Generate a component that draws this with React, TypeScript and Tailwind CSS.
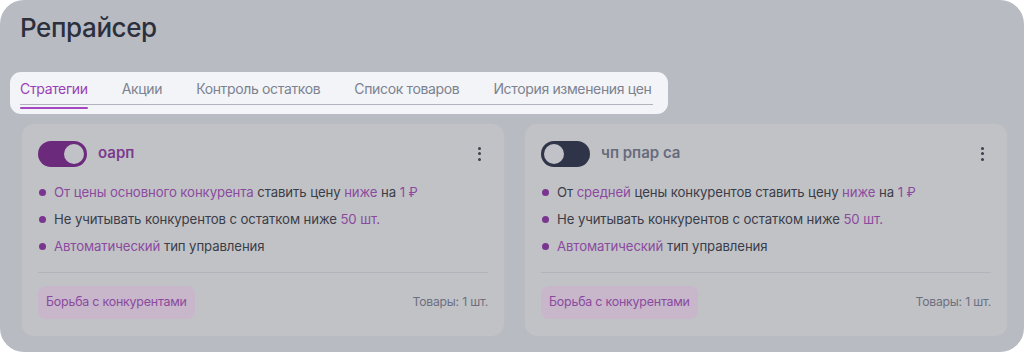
import React from "react";

const P = ({ children }: { children: React.ReactNode }) => (
  <span className="text-[#8b4a9f]">{children}</span>
);

function Bullet({ children }: { children: React.ReactNode }) {
  return (
    <div className="flex items-center h-[27px]">
      <span className="w-[7px] h-[7px] rounded-full bg-[#7a3590] mr-[8px] shrink-0" />
      <span className="text-[13.2px] text-[#3a3d49] tracking-[-0.1px] whitespace-nowrap">{children}</span>
    </div>
  );
}

function Toggle({ on }: { on: boolean }) {
  return (
    <div
      className={`w-[49px] h-[26px] rounded-full flex items-center px-[3px] ${
        on ? "bg-[#6c2a7d] justify-end" : "bg-[#2f3448] justify-start"
      }`}
    >
      <div className="w-[20px] h-[20px] rounded-full bg-[#c1c2c7]" />
    </div>
  );
}

function Card({
  on,
  name,
  lines,
}: {
  on: boolean;
  name: string;
  lines: React.ReactNode[];
}) {
  return (
    <div className="rounded-[13px] bg-[#c1c2c6] border border-[#bbbcc2] px-[16px] pt-[16px] pb-[17px] flex flex-col">
      <div className="flex items-center h-[27px]">
        <Toggle on={on} />
        <span
          className={`ml-[11px] text-[15px] font-semibold ${
            on ? "text-[#7b3a8f]" : "text-[#676b7c]"
          }`}
        >
          {name}
        </span>
        <div className="ml-auto mr-[7px] flex flex-col gap-[2.5px]">
          <span className="w-[3px] h-[3px] rounded-full bg-[#3d4150]" />
          <span className="w-[3px] h-[3px] rounded-full bg-[#3d4150]" />
          <span className="w-[3px] h-[3px] rounded-full bg-[#3d4150]" />
        </div>
      </div>
      <div className="mt-[12px] pl-[1px] flex flex-col">
        {lines.map((l, i) => (
          <Bullet key={i}>{l}</Bullet>
        ))}
      </div>
      <div className="mt-[12px] h-px bg-[#b3b4bb]" />
      <div className="mt-[13px] flex items-center justify-between">
        <div className="h-[33px] px-[8px] rounded-[8px] bg-[#c8b6cb] flex items-center text-[12.4px] text-[#8a4a9e] tracking-[-0.2px] whitespace-nowrap">
          Борьба с конкурентами
        </div>
        <span className="text-[12.2px] text-[#6d7080] tracking-[-0.2px] whitespace-nowrap">Товары: 1 шт.</span>
      </div>
    </div>
  );
}

export default function App() {
  const tabs = [
    "Стратегии",
    "Акции",
    "Контроль остатков",
    "Список товаров",
    "История изменения цен",
  ];
  return (
    <div
      className="w-[1024px] h-[352px] bg-white"
      style={{ fontFamily: "Inter, 'Noto Sans', sans-serif" }}
    >
      <div className="w-full h-full rounded-[24px] bg-[#b9bbc3] flex flex-col overflow-hidden">
        <div className="pl-[20px] pt-[11px] h-[72px]">
          <h1 className="text-[26px] leading-[34px] font-medium text-[#2c303d] tracking-[-0.4px]">
            Репрайсер
          </h1>
        </div>
        <div className="ml-[10px] w-[658px] h-[42px] rounded-[11px] bg-[#f2f4f7] px-[10px] pt-[6px]">
          <div className="flex border-b border-[#b0b3bc] h-[27px] w-[633px]">
            {tabs.map((t, i) => (
              <div
                key={t}
                className={`relative shrink-0 whitespace-nowrap text-[14px] tracking-[-0.35px] ${
                  i === 0 ? "text-[#9a3fb6]" : "text-[#7d8290]"
                } ${i === tabs.length - 1 ? "" : "mr-[34px]"}`}
              >
                {t}
                {i === 0 && (
                  <span className="absolute left-0 right-0 -bottom-[5px] h-[2px] bg-[#a447c0] rounded" />
                )}
              </div>
            ))}
          </div>
        </div>
        <div className="mt-[9px] pl-[21px] pr-[16px] grid grid-cols-2 gap-[19px]">
          <Card
            on
            name="оарп"
            lines={[
              <>
                <P>От цены основного конкурента</P> ставить цену <P>ниже</P> на <P>1 ₽</P>
              </>,
              <>
                Не учитывать конкурентов с остатком ниже <P>50 шт.</P>
              </>,
              <>
                <P>Автоматический</P> тип управления
              </>,
            ]}
          />
          <Card
            on={false}
            name="чп рпар са"
            lines={[
              <>
                От <P>средней</P> цены конкурентов ставить цену <P>ниже</P> на <P>1 ₽</P>
              </>,
              <>
                Не учитывать конкурентов с остатком ниже <P>50 шт.</P>
              </>,
              <>
                <P>Автоматический</P> тип управления
              </>,
            ]}
          />
        </div>
      </div>
    </div>
  );
}
